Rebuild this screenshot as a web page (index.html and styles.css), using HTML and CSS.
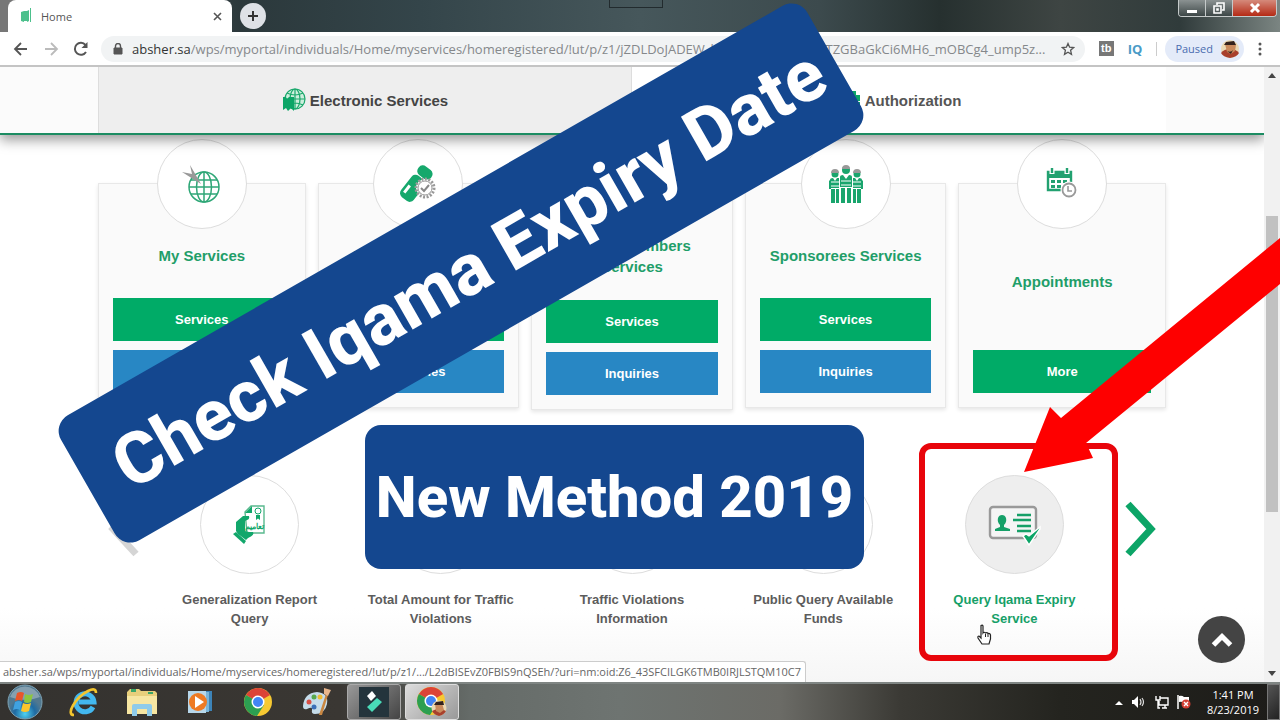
FILE: index.html
```html
<!DOCTYPE html>
<html lang="en">
<head>
    <meta charset="UTF-8">
    <meta name="viewport" content="width=device-width, initial-scale=1.0">
    <title>Home</title>
    <link rel="stylesheet" href="styles.css">
</head>
<body>
<header class="titlebar">
    <div class="tab">
        <svg class="favicon" width="12" height="16" viewBox="0 0 12 16"><path d="M1 4l3-1v11l-3-1zM4 3h3v10H4zM7 3l2-1v11l-2 1zM10 0h1v14h-1z" fill="#4cc08c"/></svg>
        <span>Home</span>
        <button class="tab-close" aria-label="Close tab"><svg width="9" height="9" viewBox="0 0 9 9"><path d="M1 1l7 7M8 1l-7 7" stroke="#555" stroke-width="1.6"/></svg></button>
    </div>
    <button class="new-tab" aria-label="New tab"><svg width="12" height="12" viewBox="0 0 12 12"><path d="M6 1v10M1 6h10" stroke="#333" stroke-width="2"/></svg></button>
    <div class="notch"></div>
    <div class="window-buttons">
        <button aria-label="Minimize"><svg width="12" height="12" viewBox="0 0 12 12"><path d="M1 8h10v3H1z" fill="#fff"/></svg></button>
        <button aria-label="Restore"><svg width="12" height="12" viewBox="0 0 12 12" fill="none" stroke="#fff" stroke-width="1.6"><path d="M4 3V1h7v7H9M1 4h7v7H1zM4 7h1v1H4z"/></svg></button>
        <button class="win-close" aria-label="Close"><svg width="12" height="12" viewBox="0 0 12 12"><path d="M2 2l8 8M10 2l-8 8" stroke="#fff" stroke-width="3"/></svg></button>
    </div>
</header>

<div class="toolbar">
    <button aria-label="Back"><svg width="16" height="16" viewBox="0 0 16 16" fill="none" stroke="#555" stroke-width="1.8"><path d="M14 8H2.500M8 2L2 8l6 6"/></svg></button>
    <button aria-label="Forward"><svg width="16" height="16" viewBox="0 0 16 16" fill="none" stroke="#bbb" stroke-width="1.8"><path d="M2 8h11.500M8 2l6 6-6 6"/></svg></button>
    <button aria-label="Reload"><svg width="16" height="16" viewBox="0 0 16 16"><path d="M13 11a6 6 0 1 1-.5-7" fill="none" stroke="#555" stroke-width="2"/><path d="M14.500 1v6h-6z" fill="#555"/></svg></button>
    <div class="address">
        <svg width="10" height="12" viewBox="0 0 10 12"><path d="M1 5h8v6H1z" fill="#555" stroke="#555"/><path d="M2.500 5V3a2.500 2.500 0 0 1 5 0v2" fill="none" stroke="#555" stroke-width="1.400"/></svg>
        <label for="url">absher.sa</label>
        <input id="url" type="text" value="/wps/myportal/individuals/Home/myservices/homeregistered/!ut/p/z1/jZDLDoJADEW_hS-YFoZlUQZGPEMTZGBaGkCi6MH6_mOBCg4_ump5z...">
        <button aria-label="Bookmark"><svg width="14" height="14" viewBox="0 0 14 14"><path d="M7 1.500l1.600 3.700 4 .4-3 2.700.9 4L7 10.200l-3.500 2.100.9-4-3-2.700 4-.4z" fill="none" stroke="#555" stroke-width="1.300"/></svg></button>
    </div>
    <span class="ext-tb">tb</span>
    <span class="ext-iq">IQ</span>
    <span class="divider"></span>
    <button class="profile">Paused
        <svg width="20" height="20" viewBox="0 0 20 20"><circle cx="10" cy="10" r="9" fill="#ead9b4"/><path d="M1 14q3-4 9-4t9 4q-2 4-9 5-7-1-9-5z" fill="#a8402c"/><path d="M5 5l8-2 3 3-1 6-4 3-4-2z" fill="#c98a5c"/><path d="M4 6l2-3 8-1 2 4zM7 12q4 2 6-1l-2 4z" fill="#33221c"/></svg>
    </button>
    <button class="menu" aria-label="Menu"><svg width="4" height="14" viewBox="0 0 4 14" fill="#555"><circle cx="2" cy="2" r="1.500"/><circle cx="2" cy="7" r="1.500"/><circle cx="2" cy="12" r="1.500"/></svg></button>
</div>

<div class="viewport">
    <div class="page">
        <nav class="main-nav">
            <a class="nav-item active" href="#electronic">
                <svg width="24" height="24" viewBox="0 0 24 24"><g fill="none" stroke="#1aa86c" stroke-width="1.200"><circle cx="13" cy="11" r="10" fill="#cdeedd"/><ellipse cx="13" cy="11" rx="5" ry="10"/><path d="M13 1v20M3 11h20M5 5q8 4 16 0M5 17q8-4 16 0"/></g><path d="M1 9h3l1 2 2-2h5v14l-3-3-3 3-2-3-3 2z" fill="#0ca567"/></svg>
                Electronic Services
            </a>
            <a class="nav-item" href="#authorization">
                <svg width="24" height="24" viewBox="0 0 24 24" fill="#0ca567"><path d="M1 5h9l2-2h7v4h4v6H1zM1 14h22v7H1z"/></svg>
                Authorization
            </a>
        </nav>

        <section class="cards">
            <article class="card">
                <div class="card-icon">
                    <svg width="40" height="40" viewBox="0 0 40 40"><g fill="none" stroke="#2fa777" stroke-width="1.500"><circle cx="22" cy="23" r="15"/><ellipse cx="22" cy="23" rx="7.500" ry="15"/><path d="M22 8v30M7 23h30M9 16h26M9 30h26"/></g><path d="M0 8l10 2-2-9 11 19z" fill="#999"/></svg>
                </div>
                <h2>My Services</h2>
                <a class="btn green" href="#">Services</a>
                <a class="btn blue" href="#">Inquiries</a>
            </article>
            <article class="card">
                <div class="card-icon">
                    <svg width="40" height="40" viewBox="0 0 40 40"><g transform="rotate(38 18 20)"><rect x="10" y="0" width="16" height="11" rx="5" fill="#16a86c"/><rect x="10" y="12" width="16" height="27" rx="5" fill="#16a86c"/><path d="M14 25v9" stroke="#fff" stroke-width="3"/></g><circle cx="27" cy="24" r="9" fill="#fff" stroke="#999" stroke-width="3" stroke-dasharray="2 1.500"/><circle cx="27" cy="24" r="7" fill="#fff" stroke="#999"/><path d="M23 24l3 3 5-6" fill="none" stroke="#888" stroke-width="2"/></svg>
                </div>
                <h2>Passport Services</h2>
                <a class="btn green" href="#">Services</a>
                <a class="btn blue" href="#">Inquiries</a>
            </article>
            <article class="card">
                <div class="card-icon"></div>
                <h2>Family Members Services</h2>
                <a class="btn green" href="#">Services</a>
                <a class="btn blue" href="#">Inquiries</a>
            </article>
            <article class="card">
                <div class="card-icon">
                    <svg width="40" height="40" viewBox="0 0 40 40">
                        <g><circle cx="20" cy="6" r="4" fill="#19a56d"/><path d="M16 5a4 4 0 0 1 8 0z" fill="#999"/><path d="M14 13q0-2 3-2l3 4 3-4q3 0 3 2v10H14zM15 24h4v15h-4zM21 24h4v15h-4z" fill="#19a56d"/><path d="M15 17h10M15 21h10" stroke="#fff"/></g>
                        <g fill="#19a56d"><circle cx="9" cy="10" r="3.500"/><circle cx="31" cy="10" r="3.500"/><path d="M4 16q0-2 3-2l2 3 2-3h2v10H5v1H3v-8zM5 25h4v14H5zM10 25h3v14h-3zM36 16q0-2-3-2l-2 3-2-3h-2v10h8v1h2v-8zM31 25h4v14h-4zM27 25h3v14h-3z"/></g>
                        <path d="M5 9a4 4 0 0 1 8 0zM27 9a4 4 0 0 1 8 0z" fill="#999"/><path d="M5 18h8M5 22h8M27 18h8M27 22h8" stroke="#fff"/>
                    </svg>
                </div>
                <h2>Sponsorees Services</h2>
                <a class="btn green" href="#">Services</a>
                <a class="btn blue" href="#">Inquiries</a>
            </article>
            <article class="card single">
                <div class="card-icon">
                    <svg width="34" height="34" viewBox="0 0 34 34"><path d="M3 5h23v18H3z" fill="#fff" stroke="#22a170" stroke-width="2.400"/><path d="M2 4h25v7H2z" fill="#22a170"/><path d="M7 1v6M22 1v6" stroke="#fff" stroke-width="5"/><path d="M7 1v5M22 1v5" stroke="#22a170" stroke-width="2.400"/><path d="M6 13h4v3H6zM12 13h4v3h-4zM18 13h4v3h-4zM6 18h4v3H6zM12 18h4v3h-4z" fill="#22a170"/><circle cx="24" cy="23" r="8.500" fill="#fff"/><circle cx="24" cy="23" r="6.500" fill="#fff" stroke="#999" stroke-width="1.800"/><path d="M23 19v5h4" fill="none" stroke="#999" stroke-width="1.600"/></svg>
                </div>
                <h2>Appointments</h2>
                <a class="btn green" href="#">More</a>
            </article>
        </section>

        <section class="carousel">
            <button class="arrow prev" aria-label="Previous"><svg width="32" height="56" viewBox="0 0 32 56"><path d="M28 3L5 28l23 25" fill="none" stroke="#d5d5d5" stroke-width="7"/></svg></button>
            <a class="item" href="#">
                <span class="item-icon"><svg width="34" height="40" viewBox="0 0 34 40"><path d="M12 7l6-6h13v27H14z" fill="#fff" stroke="#5ab98e" stroke-width="1.400"/><path d="M12 8l7-7v7z" fill="#12a76b"/><circle cx="25" cy="6" r="3" fill="none" stroke="#12a76b"/><path d="M23 10h4v5l-2-1.500-2 1.500z" fill="#12a76b"/><path d="M3 17l7-6h6q1 3-2 4l-2 1v10l4 1h4q2 3-5 6l-2 2-8-6-2-3z" fill="#12a76b"/><path d="M0 29l3-2 10 9-2 3z" fill="#12a76b"/><text x="12" y="24" class="tiny">تعاميم</text></svg></span>
                <span>Generalization Report Query</span>
            </a>
            <a class="item" href="#">
                <span class="item-icon"></span>
                <span>Total Amount for Traffic Violations</span>
            </a>
            <a class="item" href="#">
                <span class="item-icon"></span>
                <span>Traffic Violations Information</span>
            </a>
            <a class="item" href="#">
                <span class="item-icon"></span>
                <span>Public Query Available Funds</span>
            </a>
            <a class="item selected" href="#">
                <span class="item-icon"><svg width="54" height="42" viewBox="0 0 54 42"><rect x="3" y="3" width="46" height="31" rx="3" fill="#f5f5f5" stroke="#999" stroke-width="2.400"/><path d="M8 27v-2l5-2v-2q-3-3-2-7 1-3 4-3t4 3q1 4-2 7v2l6 2v2z" fill="#16a068"/><path d="M30 11h14M26 16h18M30 22h14M30 27h14" stroke="#16a068" stroke-width="2.400"/><path d="M36 32l6 9 11-16v-2l-11 9-3-2z" fill="#0ca567" stroke="#fff" stroke-width="1.400"/></svg></span>
                <span>Query Iqama Expiry Service</span>
            </a>
            <button class="arrow next" aria-label="Next"><svg width="32" height="56" viewBox="0 0 32 56"><path d="M4 3l23 25L4 53" fill="none" stroke="#0ca567" stroke-width="7"/></svg></button>
        </section>
        <button class="to-top" aria-label="Back to top"><svg width="22" height="16" viewBox="0 0 22 16"><path d="M2.500 13L11 4.500l8.500 8.500" fill="none" stroke="#fff" stroke-width="5"/></svg></button>
        <div class="status">absher.sa/wps/myportal/individuals/Home/myservices/homeregistered/!ut/p/z1/.../L2dBISEvZ0FBIS9nQSEh/?uri=nm:oid:Z6_43SFCILGK6TMB0IRJLSTQM10C7</div>
    </div>
    <div class="scrollbar">
        <svg width="8" height="5" viewBox="0 0 8 5"><path d="M0 5l4-5 4 5z" fill="#444"/></svg>
        <div class="track"><div class="thumb"></div></div>
        <svg width="8" height="5" viewBox="0 0 8 5"><path d="M0 0l4 5 4-5z" fill="#444"/></svg>
    </div>
</div>

<footer class="taskbar">
    <button aria-label="Start"><svg width="36" height="36" viewBox="0 0 36 36"><defs><radialGradient id="orb" cy=".85"><stop offset="0" stop-color="#4fd2f2"/><stop offset=".6" stop-color="#1f6ba3"/><stop offset="1" stop-color="#51788f"/></radialGradient></defs><circle cx="18" cy="18" r="17" fill="url(#orb)" stroke="#7ea3b5"/><path d="M3 13a16 16 0 0 1 30 0q-15 6-30 0z" fill="#fff" opacity=".3"/><path d="M10 9q4-2 7 0l-2 8q-3-2-7 0z" fill="#e8562a"/><path d="M18 10q4 2 8 0l-2 8q-4 2-7 0z" fill="#8cc63e"/><path d="M8 18q4-2 7 0l-2 8q-3-2-7 0z" fill="#3fa2e0"/><path d="M16 19q4 2 8 0l-2 8q-4 2-8 0z" fill="#fbc52c"/></svg></button>
    <button aria-label="Internet Explorer"><svg width="32" height="32" viewBox="0 0 32 32"><path d="M25 21a9 9 0 1 1 1-5H11" fill="none" stroke="#43b8ef" stroke-width="5"/><path d="M6 29C-3 29 8 11 20 5q8-4 8 2" fill="none" stroke="#f3c52e" stroke-width="2.600"/></svg></button>
    <button aria-label="Explorer"><svg width="32" height="32" viewBox="0 0 32 32"><path d="M1 6l3-3h9l2 2h14l2 2v20H1z" fill="#e8cf7c"/><path d="M1 10h30v18H1z" fill="#f7e6a2"/><path d="M5 3h5v3H5zM22 6h5v2h-5z" fill="#3aa66a"/><path d="M6 30V20q0-2 2-2h16q2 0 2 2v10h-5v-7H11v7z" fill="#8fcbea"/></svg></button>
    <button aria-label="Media Player"><svg width="28" height="28" viewBox="0 0 28 28"><path d="M8 3h18v20H8z" fill="#3d84b8"/><path d="M5 4h18v20H5z" fill="#7bb5d8"/><path d="M2 3h18v22H2z" fill="#b7d7ea"/><circle cx="12" cy="14" r="9" fill="#ee7a24"/><path d="M9 8l9 6-9 6z" fill="#fff"/></svg></button>
    <button aria-label="Chrome"><svg width="30" height="30" viewBox="0 0 30 30"><circle cx="15" cy="15" r="14" fill="#f7c932"/><path d="M15 15L2.900 8A14 14 0 0 1 27.100 8z" fill="#dc4437"/><path d="M2.900 8A14 14 0 0 0 14 29l7-11-6-3z" fill="#2c9f51"/><circle cx="15" cy="15" r="6.500" fill="#fff"/><circle cx="15" cy="15" r="5" fill="#4285f4"/></svg></button>
    <button aria-label="Paint"><svg width="32" height="32" viewBox="0 0 32 32"><path d="M3 20Q4 7 17 6q12 1 10 12-2 10-12 10-4 0-3-4t-5-1q-4 1-4-3z" fill="#c5dcea"/><circle cx="9" cy="16" r="2.500" fill="#d94f45"/><circle cx="14" cy="11" r="2.500" fill="#58a94e"/><circle cx="20" cy="11" r="2.500" fill="#efbb33"/><circle cx="14" cy="21" r="2.500" fill="#3b6fb8"/><path d="M19 29L26 8l2 1-6 20z" fill="#c98742"/><path d="M24 2l7 2-3 6-4-2z" fill="#e8b58a"/></svg></button>
    <button class="task" aria-label="Filmora"><svg width="30" height="30" viewBox="0 0 30 30"><path d="M0 0h30v30H0z" fill="#24343c"/><path d="M8 9l5-5 4 5-5 5z" fill="#fff"/><path d="M8 20l10-9 5 4-10 10z" fill="#49dbb8"/></svg></button>
    <button class="task current" aria-label="Chrome window"><svg width="32" height="32" viewBox="0 0 32 32"><circle cx="15" cy="15" r="14" fill="#f7c932"/><path d="M15 15L2.900 8A14 14 0 0 1 27.100 8z" fill="#dc4437"/><path d="M2.900 8A14 14 0 0 0 14 29l7-11-6-3z" fill="#2c9f51"/><circle cx="15" cy="15" r="6.500" fill="#fff"/><circle cx="15" cy="15" r="5" fill="#4285f4"/><circle cx="23" cy="22" r="7.500" fill="#ead9b4"/><path d="M16 25q7-4 14 0-2 4-7 5-5-1-7-5z" fill="#a8402c"/><path d="M19 18l7-1 2 7-4 3-4-2z" fill="#c98a5c"/><path d="M18 19l2-3 7-1 1 4z" fill="#33221c"/></svg></button>
    <div class="tray">
        <svg width="8" height="5" viewBox="0 0 8 5"><path d="M0 5l4-4 4 4z" fill="#fff"/></svg>
        <svg width="16" height="14" viewBox="0 0 16 14"><path d="M1 5h2l4-4v12L3 9H1z" fill="#fff"/><path d="M9 4q2 3 0 6M11 3q3 4 0 8" fill="none" stroke="#ddd" stroke-width="1.200"/></svg>
        <svg width="14" height="14" viewBox="0 0 14 14" fill="none" stroke="#fff" stroke-width="1.400"><path d="M5 3h8v7H4V6M7 13h5M10 10v3M1 1v4h4V1M3 5v8h2"/></svg>
        <svg width="14" height="16" viewBox="0 0 14 16"><path d="M1 1v14" stroke="#fff" stroke-width="1.500"/><path d="M2 2q3-1 5 1h5v6H7Q5 7 2 8z" fill="#fff"/><circle cx="9" cy="10" r="4.500" fill="#d33f33"/><path d="M7 8l4 4M11 8l-4 4" stroke="#fff" stroke-width="1.400"/></svg>
        <div class="clock"><span>1:41 PM</span><span>8/23/2019</span></div>
    </div>
    <button class="show-desktop" aria-label="Show desktop"></button>
</footer>

<!-- captions and pointers lying over the desktop -->
<div class="frame"></div>
<svg class="pointer" width="260" height="250" viewBox="0 0 260 250"><path d="M4 242L30 177l11 11L260 8v46L66 213l7 15z" fill="#fe0000"/></svg>
<svg class="hand" width="16" height="22" viewBox="0 0 16 22"><path d="M4 1.500q1.500-1 2 .5v7q1-1.500 2.500 0 1.500-1 2.500.5 2-.5 2.500 1.500v4l-1.500 5H5L1 14q-.5-2 1-2l2 2z" fill="#fff" stroke="#222" stroke-width="1.200"/><path d="M8.500 10v3M11 10v3" stroke="#222"/></svg>
<div class="caption tilted">Check Iqama Expiry Date</div>
<div class="caption flat">New Method 2019</div>
</body>
</html>
```
FILE: styles.css
```css
* {
    box-sizing: border-box;
}
body {
    display: flex;
    flex-direction: column;
    height: 100vh;
    margin: 0;
    overflow: hidden;
    position: relative;
    font-family: "Liberation Sans", Arial, sans-serif;
    background: #fff;
}
button {
    display: flex;
    align-items: center;
    justify-content: center;
    padding: 0;
    border: 0;
    background: none;
    font: inherit;
}
a {
    text-decoration: none;
    color: inherit;
}
h2 {
    margin: 0;
}
svg {
    flex: none;
}

/* browser window */
.titlebar {
    display: flex;
    align-items: flex-start;
    height: 32px;
    padding-left: 8px;
    background: linear-gradient(90deg, #777 0, #777 8px, #2b383b 240px, #34454a 420px, #46575b 640px, #3c4a4d 820px, #26302f 940px, #3e4543 1060px, #303b3b 1180px, #7b8582 100%);
}
.tab {
    display: flex;
    align-items: center;
    width: 224px;
    height: 32px;
    padding: 0 10px 0 12px;
    border-radius: 8px 8px 0 0;
    background: #fff;
    color: #555;
    font: 11px "Open Sans", sans-serif;
}
.favicon {
    margin-right: 9px;
}
.tab-close {
    margin-left: auto;
}
.new-tab {
    width: 26px;
    height: 26px;
    margin: 3px 0 0 8px;
    border-radius: 50%;
    background: #dee1e6;
}
.notch {
    width: 54px;
    height: 8px;
    margin: 0 auto 0 27%;
    border: 1px solid #222b2e;
    border-top: 0;
}
.window-buttons {
    display: flex;
    margin-right: 3px;
    border: 1px solid #c5caca;
    border-top: 0;
    border-radius: 0 0 4px 4px;
    overflow: hidden;
}
.window-buttons button {
    width: 27px;
    height: 16px;
    border-right: 1px solid #c5caca;
    background: linear-gradient(#8b9292, #3d4747);
}
.window-buttons .win-close {
    width: 43px;
    border: 0;
    background: linear-gradient(#d58a7b, #b52a15);
}
.toolbar {
    display: flex;
    align-items: center;
    height: 35px;
    padding: 0 18px 0 13px;
    border-bottom: 2px solid #c4c4c4;
    background: #fff;
    gap: 14px;
}
.address {
    flex: 1;
    display: flex;
    align-items: center;
    height: 26px;
    margin-left: -2px;
    padding: 0 10px 0 12px;
    border-radius: 13px;
    background: #f1f3f4;
    font: 13px "Open Sans", sans-serif;
}
.address label {
    margin-left: 9px;
    color: #333;
}
.address input {
    flex: 1;
    min-width: 0;
    padding: 0;
    border: 0;
    outline: 0;
    background: none;
    color: #85888b;
    font: inherit;
}
.ext-tb {
    width: 15px;
    height: 15px;
    background: #777;
    color: #fff;
    font-size: 11px;
    font-weight: bold;
    line-height: 15px;
    text-align: center;
}
.ext-iq {
    color: #4a9bc7;
    font: bold 13px "Open Sans", sans-serif;
}
.divider {
    width: 1px;
    height: 14px;
    background: #ccc;
}
.profile {
    gap: 7px;
    height: 26px;
    margin-left: -6px;
    padding: 0 4px 0 10px;
    border-radius: 13px;
    background: #e4ebf9;
    color: #4a6cb0;
    font: 11px "Open Sans", sans-serif;
}
.viewport {
    flex: 1;
    display: flex;
    min-height: 0;
}
.page {
    flex: 1;
    min-width: 0;
    position: relative;
    overflow: hidden;
    background: linear-gradient(#fff 88%, #f6f6f6);
}
.scrollbar {
    display: flex;
    flex-direction: column;
    align-items: center;
    width: 16px;
    padding: 6px 2px;
    background: #f1f1f1;
}
.track {
    flex: 1;
    width: 100%;
    padding-top: 138px;
}
.thumb {
    height: 65%;
    background: #c1c1c1;
}

/* portal page */
.main-nav {
    display: flex;
    justify-content: center;
    position: relative;
    z-index: 1;
    border-bottom: 2px solid #1c8c62;
    background: #fbfbfb;
    box-shadow: 0 5px 12px rgba(0, 0, 0, .4);
}
.nav-item {
    flex: 0 1 534px;
    display: flex;
    align-items: center;
    justify-content: center;
    gap: 4px;
    height: 66px;
    background: #fff;
    color: #555;
    font-size: 15px;
    font-weight: bold;
}
.nav-item.active {
    border: solid #ddd;
    border-width: 0 1px;
    background: #eee;
    color: #444;
}
.cards {
    display: grid;
    grid-template-columns: 208fr 202fr 202fr 202fr 208fr;
    align-items: start;
    gap: 12px;
    max-width: 1068px;
    margin: 0 auto;
    padding-top: 48px;
}
.card {
    padding: 0 14px 14px;
    border: 1px solid #e8e8e8;
    background: #fafafa;
    box-shadow: 0 2px 4px rgba(0, 0, 0, .1);
    text-align: center;
}
.card-icon {
    display: flex;
    align-items: center;
    justify-content: center;
    width: 90px;
    height: 90px;
    margin: -45px auto 0;
    border: 1px solid #ddd;
    border-radius: 50%;
    background: #fff;
}
.card h2 {
    display: flex;
    align-items: center;
    justify-content: center;
    min-height: 40px;
    margin: 6px 0 23px;
    padding: 0 8px;
    color: #1f9e69;
    font-size: 15px;
    line-height: 21px;
}
.card.single h2 {
    min-height: 92px;
}
.btn {
    display: block;
    color: #fff;
    font-size: 13px;
    font-weight: bold;
    line-height: 43px;
}
.btn + .btn {
    margin-top: 9px;
}
.green {
    background: #00ab67;
}
.blue {
    background: #2887c4;
}
.carousel {
    display: flex;
    max-width: 1068px;
    margin: 65px auto 0;
}
.arrow {
    width: 56px;
    height: 108px;
}
.next {
    justify-content: flex-end;
    padding-right: 10px;
}
.prev {
    justify-content: flex-start;
    padding-left: 10px;
}
.item {
    flex: 1;
    padding: 0 16px;
    color: #5c5c5c;
    font-size: 13px;
    font-weight: bold;
    line-height: 19px;
    text-align: center;
}
.item-icon {
    display: flex;
    align-items: center;
    justify-content: center;
    width: 99px;
    height: 99px;
    margin: 0 auto 16px;
    border: 1px solid #ddd;
    border-radius: 50%;
    background: #fff;
}
.selected {
    color: #16a068;
}
.selected .item-icon {
    background: #eee;
}
.tiny {
    fill: #12a76b;
    font-size: 8px;
}
.to-top {
    position: absolute;
    right: 19px;
    bottom: 19px;
    width: 47px;
    height: 47px;
    border-radius: 50%;
    background: #444;
}
.status {
    position: absolute;
    left: 0;
    bottom: 0;
    height: 21px;
    padding: 0 4px 0 3px;
    border: solid #ccc;
    border-width: 1px 1px 0 0;
    border-radius: 0 3px 0 0;
    background: #fff;
    color: #666;
    font: 11px/19px "Open Sans", sans-serif;
    white-space: nowrap;
}

/* taskbar */
.taskbar {
    display: flex;
    align-items: center;
    height: 38px;
    padding-left: 7px;
    border-top: 2px solid #7f8583;
    background: linear-gradient(90deg, #34322f, #3a3733 340px, #656b68 470px, #6e7471 620px, #6b6b66 780px, #3b3a35 900px, #24241f 1060px, #1d1c19);
}
.taskbar button {
    width: 58px;
    height: 36px;
}
.taskbar button:first-child {
    width: 48px;
    justify-content: flex-start;
}
.taskbar .task {
    width: 54px;
    margin: 0 2px;
    border: 1px solid #aaa;
    border-radius: 3px;
    background: linear-gradient(135deg, #999, #444);
}
.taskbar .current {
    border-color: #ddd;
    background: linear-gradient(135deg, #ddd, #999);
}
.tray {
    display: flex;
    align-items: center;
    gap: 8px;
    margin-left: auto;
}
.clock {
    display: flex;
    flex-direction: column;
    align-items: center;
    width: 68px;
    color: #fff;
    font: 11px/15px "Open Sans", sans-serif;
}
.taskbar .show-desktop {
    width: 13px;
    border: 1px solid #777;
    background: linear-gradient(135deg, #555, #222);
}

/* overlays */
.caption {
    position: absolute;
    z-index: 2;
    display: flex;
    align-items: center;
    justify-content: center;
    height: 144px;
    background: #14478f;
    color: #fff;
    font-family: Roboto, sans-serif;
    font-weight: 800;
    white-space: nowrap;
}
.tilted {
    left: 31px;
    top: 201px;
    width: 860px;
    padding-left: 18px;
    border-radius: 18px;
    font-size: 72px;
    transform: rotate(-29.8deg);
}
.flat {
    left: 365px;
    top: 425px;
    width: 499px;
    border-radius: 16px;
    font-size: 58px;
}
.frame {
    position: absolute;
    left: 919px;
    top: 443px;
    width: 199px;
    height: 218px;
    border: 6px solid #e8050b;
    border-radius: 12px;
}
.pointer {
    position: absolute;
    left: 1020px;
    top: 230px;
}
.hand {
    position: absolute;
    left: 977px;
    top: 624px;
}
```
